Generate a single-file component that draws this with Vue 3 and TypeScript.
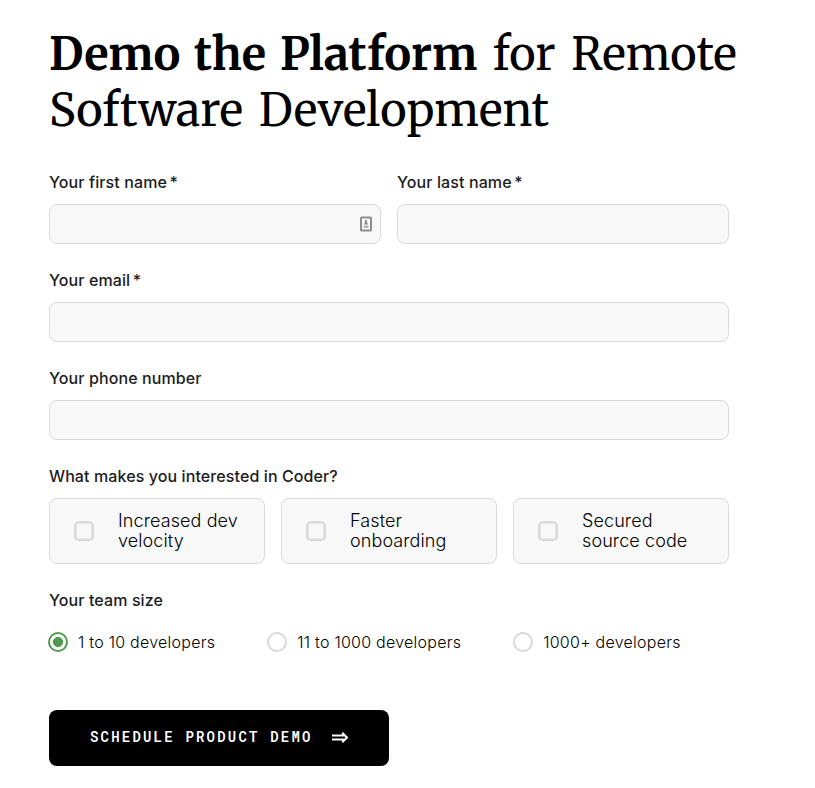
<script setup lang="ts">
import { ref } from 'vue'

interface Field {
  id: string
  label: string
  required: boolean
  wide: boolean
  autofill: boolean
}

const fields: Field[] = [
  { id: 'first', label: 'Your first name', required: true, wide: false, autofill: true },
  { id: 'last', label: 'Your last name', required: true, wide: false, autofill: false },
  { id: 'email', label: 'Your email', required: true, wide: true, autofill: false },
  { id: 'phone', label: 'Your phone number', required: false, wide: true, autofill: false },
]

const interests: string[][] = [
  ['Increased dev', 'velocity'],
  ['Faster', 'onboarding'],
  ['Secured', 'source code'],
]

const sizes: string[] = ['1 to 10 developers', '11 to 1000 developers', '1000+ developers']
const teamSize = ref<string>(sizes[0])
const picked = ref<number[]>([])
</script>

<template>
  <main class="page">
    <h1 class="title">
      <span class="line"><strong class="strong">Demo the Platform</strong> <span class="light">for Remote</span></span>
      <span class="line second">Software Development</span>
    </h1>
    <form class="form" @submit.prevent>
      <div class="fields">
        <div v-for="f in fields" :key="f.id" class="field" :class="{ wide: f.wide }">
          <label class="label" :for="f.id">{{ f.label }}<span v-if="f.required" class="star">*</span></label>
          <div class="box">
            <input :id="f.id" class="input" type="text" />
            <svg v-if="f.autofill" class="card" width="12" height="16" viewBox="0 0 12 16">
              <rect x="1" y="1.500" width="10" height="13" rx="0.6" fill="#fafafa" stroke="#8e8e8e" stroke-width="2" />
              <path d="M5 4h2v2.200L8.200 8.500H3.800L5 6.200z" fill="#8a8a8a" />
              <path d="M3.500 9.500h5v2.500h-5z" fill="#b4b4b4" />
            </svg>
          </div>
        </div>
      </div>

      <div class="label group">What makes you interested in Coder?</div>
      <div class="cards">
        <label v-for="(lines, i) in interests" :key="i" class="option">
          <input v-model="picked" class="check" type="checkbox" :value="i" />
          <span class="text"><span v-for="l in lines" :key="l" class="row">{{ l }}</span></span>
        </label>
      </div>

      <div class="label group">Your team size</div>
      <div class="radios">
        <label v-for="s in sizes" :key="s" class="choice">
          <input v-model="teamSize" class="radio" type="radio" name="size" :value="s" />
          <span>{{ s }}</span>
        </label>
      </div>

      <button class="submit" type="submit">
        <span class="caption">SCHEDULE PRODUCT DEMO</span>
        <svg class="arrow" width="17" height="12" viewBox="0 0 17 12">
          <path d="M0 3.500H13M0 7.500H13M10.200 0.700L15 5.500L10.200 10.300" fill="none" stroke="#fff" stroke-width="2" />
        </svg>
      </button>
    </form>
  </main>
</template>

<style>
body {
  background: #fff;
}
</style>

<style scoped>
.page {
  box-sizing: border-box;
  width: 815px;
  height: 788px;
  padding: 26px 0 0 49px;
  overflow: hidden;
  font-family: Inter, "Liberation Sans", sans-serif;
  color: #000;
}
.title {
  margin: 0;
  font-family: Merriweather, "DejaVu Serif Condensed", "DejaVu Serif", serif;
  font-size: 45px;
  font-weight: 400;
  line-height: 56px;
  word-spacing: 5px;
}
.line {
  display: block;
  white-space: nowrap;
}
.second {
  letter-spacing: 0.060px;
}
.strong {
  font-weight: 700;
  word-spacing: 3px;
}
.form {
  width: 680px;
}
.fields {
  display: grid;
  grid-template-columns: 1fr 1fr;
  column-gap: 16px;
  row-gap: 24px;
  margin-top: 32px;
}
.wide {
  grid-column: 1 / -1;
}
.label {
  display: block;
  height: 24px;
  font-size: 16px;
  font-weight: 550;
  letter-spacing: 0.100px;
  line-height: 24px;
  color: #1c1c1c;
}
.star {
  margin-left: 2.500px;
}
.box {
  box-sizing: border-box;
  display: flex;
  align-items: center;
  height: 40px;
  margin-top: 10px;
  padding: 0 8px;
  border: 1px solid #d9d9d9;
  border-radius: 8px;
  background: #f8f8f8;
}
.input {
  flex: 1;
  min-width: 0;
  border: 0;
  outline: 0;
  background: transparent;
}
.group {
  margin-top: 24px;
}
.cards {
  display: grid;
  grid-template-columns: repeat(3, 1fr);
  gap: 16px;
  margin-top: 10px;
}
.option {
  box-sizing: border-box;
  display: flex;
  align-items: center;
  height: 66px;
  padding-left: 24px;
  border: 1px solid #d9d9d9;
  border-radius: 8px;
  background: #f8f8f8;
}
.check {
  appearance: none;
  flex: none;
  box-sizing: border-box;
  width: 20px;
  height: 20px;
  margin: 0 24px 0 0;
  border: 2px solid #d9d9d9;
  border-radius: 5px;
  box-shadow: inset 0 0 0 1px #e8e8e8;
}
.text {
  font-size: 18px;
  font-weight: 300;
  letter-spacing: 0.100px;
  line-height: 20px;
}
.row {
  display: block;
}
.radios {
  display: flex;
  gap: 52px;
  margin: 18px 0 0 -1px;
}
.choice {
  display: flex;
  align-items: center;
  height: 24px;
  font-size: 16px;
  font-weight: 300;
  letter-spacing: 0.250px;
  white-space: nowrap;
}
.radio {
  appearance: none;
  flex: none;
  box-sizing: border-box;
  width: 20px;
  height: 20px;
  margin: 0 10px 0 0;
  border: 2px solid #d9d9d9;
  border-radius: 50%;
  background: #fff;
}
.radio:checked {
  border-color: #509a50;
  background: radial-gradient(circle, #509a50 4.700px, #fff 5.300px);
}
.submit {
  display: flex;
  align-items: center;
  width: 340px;
  height: 56px;
  margin: 56px 0 0;
  padding: 0 0 0 41px;
  border: 0;
  border-radius: 8px;
  background: #000;
  color: #fff;
  font-family: "Roboto Mono", "Liberation Mono", monospace;
  font-size: 14px;
  font-weight: 600;
  letter-spacing: 2.200px;
}
.caption {
  padding-bottom: 3px;
}
.arrow {
  margin-left: 19px;
}
</style>
